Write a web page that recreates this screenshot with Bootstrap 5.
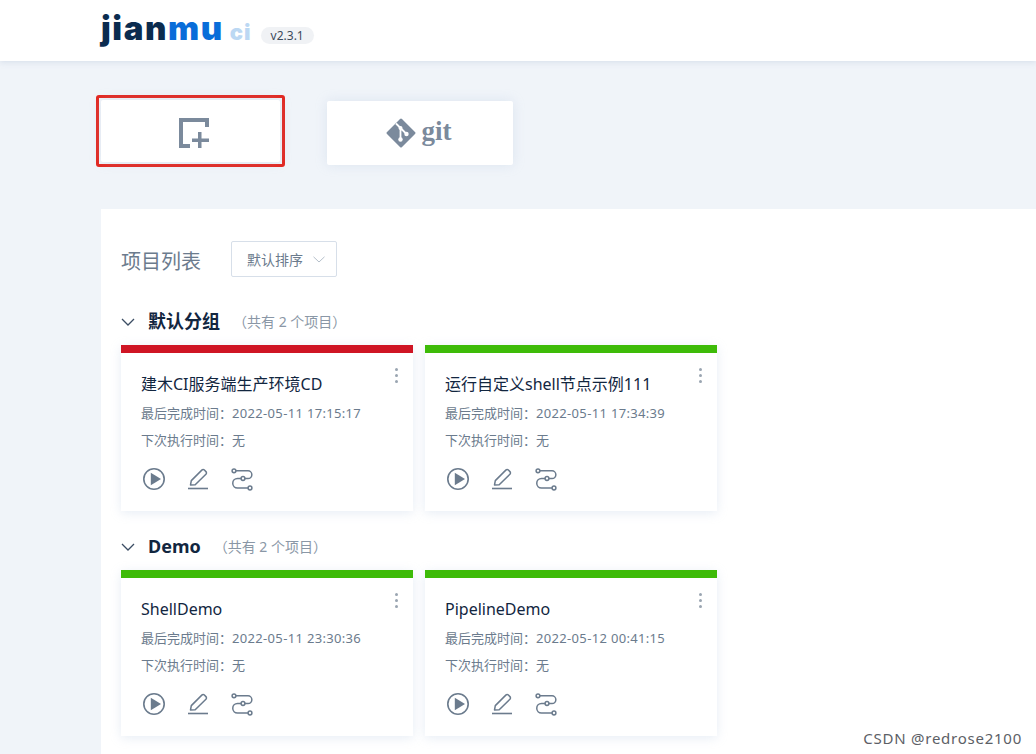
<!DOCTYPE html>
<html lang="zh">
<head>
  <meta charset="UTF-8" />
  <meta name="viewport" content="width=device-width, initial-scale=1.0"/>
  <title>jianmu ci</title>
  <link href="https://cdn.jsdelivr.net/npm/bootstrap@5.3.2/dist/css/bootstrap.min.css" rel="stylesheet">
  <style>
    html, body { height: 754px; overflow: hidden; }
    body { background: #f0f4f9; font-family: "Noto Sans", "Noto Sans CJK SC", sans-serif; color: #082340; }
    .topbar { height: 61px; background: #fff; box-shadow: 0 1px 6px rgba(150,170,200,.3); padding-left: 101px; }
    .logo { font-family: "Inter", sans-serif; font-weight: 900; font-size: 33px; line-height: 61px; letter-spacing: 1.6px; height: 61px; margin-top: -2px; }
    .logo-dark { color: #0b2c4f; }
    .logo-blue { color: #096dd9; }
    .logo-ci { color: #bcd8f3; font-size: 22px; letter-spacing: 1px; margin-left: 6px; }
    .ver { font-size: 12px; line-height: 17px; height: 17px; padding: 0 10px; background: #f0f2f5; border-radius: 9px; color: #3c4a5c; margin-left: 9px; margin-top: 27px; }
    .entry-row { padding: 39px 0 0 101px; height: 148px; gap: 47px; }
    .entry { background: #fff; border-radius: 2px; box-shadow: 0 0 12px rgba(170,190,220,.28); }
    .entry-frame { margin: -5px -5px 0 -5px; padding: 2px; border: 3px solid #e3261f; border-radius: 3px; }
    .entry-new { width: 179px; height: 62px; padding: 4px 0 0 7px; }
    .entry-git { width: 186px; height: 64px; margin-top: 1px; padding-right: 3px; }
    .git-word { font-family: "Liberation Serif", serif; font-weight: 700; font-size: 27px; color: #7b8a9c; line-height: 1; margin-left: 6px; margin-top: -3px; }
    .panel { margin-left: 101px; background: #fff; height: 545px; padding: 32px 20px 0; }
    .list-title { font-size: 20px; line-height: 36px; color: #6b7b8d; font-weight: 400; margin: 0; padding-top: 3px; height: 36px; }
    .sorter { width: 106px; height: 36px; margin-left: 30px; border: 1px solid #d7dfe9; border-radius: 2px; font-size: 14px; color: #6b7b8d; padding-left: 15px; gap: 10px; }
    .group-head { height: 25px; }
    .first-group { margin-top: 32px; }
    .next-group { margin-top: 23px; }
    .group-name { font-size: 18px; font-weight: 700; color: #12263f; margin-left: 13px; line-height: 25px; }
    .group-count { font-size: 14px; color: #8a97a6; margin-left: 13px; line-height: 25px; }
    .cards { margin-top: 11px; gap: 12px; }
    .job { width: 292px; height: 166px; background: #fff; border-top: 8px solid #3ebb08; box-shadow: 0 2px 10px rgba(170,190,220,.28); padding: 19px 20px 0; }
    .job-red { border-top-color: #cf1524; }
    .job-name { font-size: 16px; line-height: 24px; color: #12263f; }
    .job-meta { font-size: 13px; line-height: 18px; color: #6b7b8d; margin-top: 9px; }
    .job-name + .job-meta { margin-top: 8px; }
    .job-time { letter-spacing: .33px; }
    .job-icons { margin: 18px 0 0 1px; gap: 20px; height: 24px; }
    .job-menu { top: 15px; right: 15px; gap: 3px; }
    .job-menu i { display: block; width: 3px; height: 3px; border-radius: 50%; background: #9aa5b1; }
    .watermark { right: 14px; bottom: 6px; font-size: 15px; line-height: 20px; color: #5c6066; text-shadow: 0 0 3px #fff; letter-spacing: .75px; }
  </style>
</head>
<body class="position-relative">

  <svg width="0" height="0" class="position-absolute">
    <symbol id="ic-play" viewBox="0 0 24 24">
      <circle cx="12" cy="12" r="10.2" fill="none" stroke="#6b7b8d" stroke-width="1.6"/>
      <path d="M8.800 5.800 19 12 8.800 18.200z" fill="#6b7b8d"/>
    </symbol>
    <symbol id="ic-edit" viewBox="0 0 24 24">
      <path d="M4.500 18 5.300 13.600 15.800 3.100a1.800 1.800 0 0 1 2.600 0l1.500 1.500a1.800 1.800 0 0 1 0 2.600L9.200 17.700z" fill="none" stroke="#6b7b8d" stroke-width="1.500" stroke-linejoin="round"/>
      <path d="M2 21.500h20" stroke="#6b7b8d" stroke-width="1.600"/>
    </symbol>
    <symbol id="ic-flow" viewBox="0 0 24 24">
      <g fill="none" stroke="#6b7b8d" stroke-width="1.500">
        <circle cx="4" cy="3.800" r="1.900"/>
        <circle cx="13" cy="11.500" r="1.900"/>
        <circle cx="20" cy="21" r="1.900"/>
        <path d="M6 3.800h12a3.850 3.850 0 0 1 0 7.700h-3M11 11.500H7.500a4.750 4.750 0 0 0 0 9.500H18"/>
      </g>
    </symbol>
  </svg>

  <div class="topbar d-flex align-items-start">
    <div class="logo"><span class="logo-dark">jian</span><span class="logo-blue">mu</span><span class="logo-ci">ci</span></div>
    <div class="ver">v2.3.1</div>
  </div>

  <div class="entry-row d-flex align-items-start">
    <div class="entry-frame">
      <div class="entry entry-new d-flex align-items-center justify-content-center">
        <svg width="30" height="30" viewBox="0 0 30 30">
          <path d="M0 0h30v9h-4V4H4v22h7v4H0z" fill="#7b8a9c"/>
          <path d="M19 14h3.500v6.500H30V24h-7.500v6H19v-6h-6v-3.500h6z" fill="#7b8a9c"/>
        </svg>
      </div>
    </div>
    <div class="entry entry-git d-flex align-items-center justify-content-center">
      <svg width="30" height="30" viewBox="0 0 30 30">
        <path d="M14 1 1 14a1.400 1.400 0 0 0 0 2l13 13a1.400 1.400 0 0 0 2 0l13-13a1.400 1.400 0 0 0 0-2L16 1a1.400 1.400 0 0 0-2 0z" fill="#7b8a9c"/>
        <path d="M10 5.500 20.500 16M14.500 10v11" stroke="#fff" stroke-width="1.800" fill="none"/>
        <circle cx="14.500" cy="10" r="2" fill="#fff"/><circle cx="14.500" cy="21.500" r="2.200" fill="#fff"/><circle cx="20.500" cy="16" r="2.200" fill="#fff"/>
      </svg>
      <span class="git-word">git</span>
    </div>
  </div>

  <div class="panel">
    <div class="d-flex align-items-center">
      <h2 class="list-title">项目列表</h2>
      <div class="sorter d-flex align-items-center">
        <span>默认排序</span>
        <svg width="12" height="7" viewBox="0 0 12 7"><path d="M.5.8 6 6l5.500-5.200" fill="none" stroke="#b5bfca" stroke-width="1"/></svg>
      </div>
    </div>

    <div class="group-head first-group d-flex align-items-center">
      <svg width="14" height="8" viewBox="0 0 14 8"><path d="M1 1l6 6 6-6" fill="none" stroke="#3b4d63" stroke-width="1.300"/></svg>
      <span class="group-name">默认分组</span>
      <span class="group-count">（共有 2 个项目）</span>
    </div>
    <div class="cards d-flex">
      <div class="job job-red position-relative">
        <div class="job-menu position-absolute d-flex flex-column"><i></i><i></i><i></i></div>
        <div class="job-name">建木CI服务端生产环境CD</div>
        <div class="job-meta">最后完成时间：<span class="job-time">2022-05-11 17:15:17</span></div>
        <div class="job-meta">下次执行时间：无</div>
        <div class="job-icons d-flex">
          <svg width="24" height="24"><use href="#ic-play"/></svg>
          <svg width="24" height="24"><use href="#ic-edit"/></svg>
          <svg width="24" height="24"><use href="#ic-flow"/></svg>
        </div>
      </div>
      <div class="job position-relative">
        <div class="job-menu position-absolute d-flex flex-column"><i></i><i></i><i></i></div>
        <div class="job-name">运行自定义shell节点示例111</div>
        <div class="job-meta">最后完成时间：<span class="job-time">2022-05-11 17:34:39</span></div>
        <div class="job-meta">下次执行时间：无</div>
        <div class="job-icons d-flex">
          <svg width="24" height="24"><use href="#ic-play"/></svg>
          <svg width="24" height="24"><use href="#ic-edit"/></svg>
          <svg width="24" height="24"><use href="#ic-flow"/></svg>
        </div>
      </div>
    </div>

    <div class="group-head next-group d-flex align-items-center">
      <svg width="14" height="8" viewBox="0 0 14 8"><path d="M1 1l6 6 6-6" fill="none" stroke="#3b4d63" stroke-width="1.300"/></svg>
      <span class="group-name">Demo</span>
      <span class="group-count">（共有 2 个项目）</span>
    </div>
    <div class="cards d-flex">
      <div class="job position-relative">
        <div class="job-menu position-absolute d-flex flex-column"><i></i><i></i><i></i></div>
        <div class="job-name">ShellDemo</div>
        <div class="job-meta">最后完成时间：<span class="job-time">2022-05-11 23:30:36</span></div>
        <div class="job-meta">下次执行时间：无</div>
        <div class="job-icons d-flex">
          <svg width="24" height="24"><use href="#ic-play"/></svg>
          <svg width="24" height="24"><use href="#ic-edit"/></svg>
          <svg width="24" height="24"><use href="#ic-flow"/></svg>
        </div>
      </div>
      <div class="job position-relative">
        <div class="job-menu position-absolute d-flex flex-column"><i></i><i></i><i></i></div>
        <div class="job-name">PipelineDemo</div>
        <div class="job-meta">最后完成时间：<span class="job-time">2022-05-12 00:41:15</span></div>
        <div class="job-meta">下次执行时间：无</div>
        <div class="job-icons d-flex">
          <svg width="24" height="24"><use href="#ic-play"/></svg>
          <svg width="24" height="24"><use href="#ic-edit"/></svg>
          <svg width="24" height="24"><use href="#ic-flow"/></svg>
        </div>
      </div>
    </div>
  </div>

  <div class="watermark position-absolute">CSDN @redrose2100</div>

</body>
</html>
